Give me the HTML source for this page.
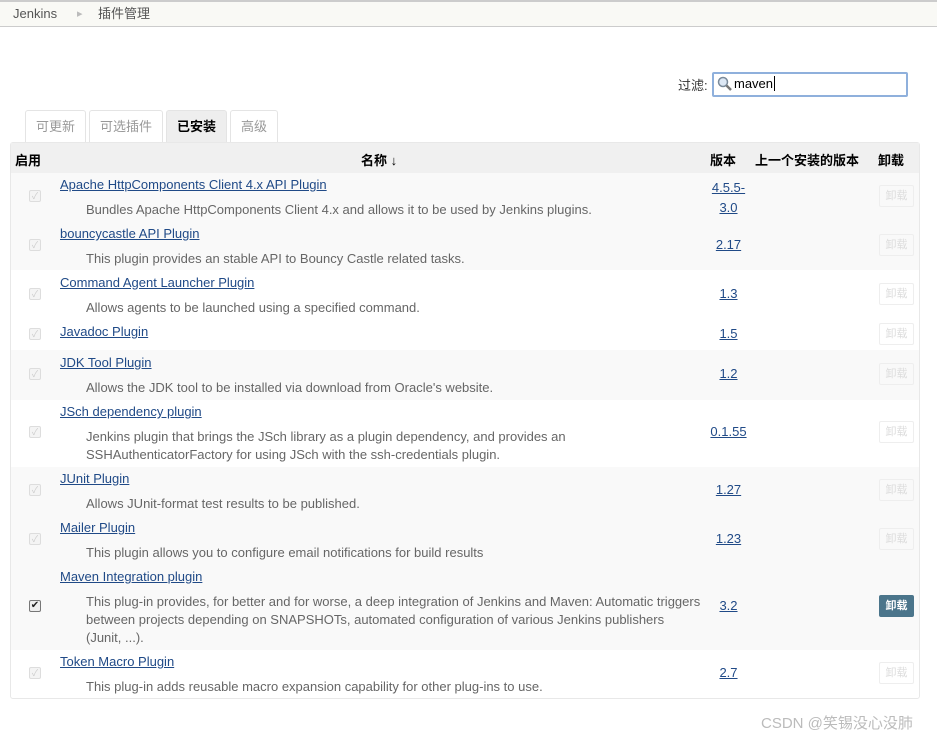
<!DOCTYPE html>
<html><head><meta charset="utf-8"><style>
*{margin:0;padding:0;box-sizing:border-box}
body{width:937px;height:737px;background:#fff;font-family:"Liberation Sans","Noto Sans CJK SC",sans-serif;font-size:13px;color:#333;position:relative;overflow:hidden}
.a{position:absolute;white-space:nowrap}
a{color:#204a87;text-decoration:underline}
.bc{left:0;top:0;width:937px;height:27px;background:#f9f9f5;border-top:2px solid #ccc;border-bottom:1px solid #ccc}
.tab{top:110px;height:32px;border:1px solid #e4e4e4;border-bottom:none;border-radius:3px 3px 0 0;color:#999;font-size:13px;text-align:center;line-height:31px}
.tbl{left:10px;top:142px;width:910px;height:557px;border:1px solid #e8e8e8;border-radius:3px}
.row{position:absolute;left:11px;width:908px}
.cb{position:absolute;left:18px;width:12px;height:12px;border:1px solid #ddd;border-radius:2px;background:#f4f4f4;color:#ccc;font-size:9px;line-height:10px;text-align:center}
.nm{position:absolute;left:49px;font-size:13px}
.ds{position:absolute;left:75px;color:#666;font-size:13px;line-height:18px}
.vr{position:absolute;left:690px;width:55px;text-align:center;line-height:20px}
.un{position:absolute;left:868px;width:35px;height:22px;border:1px solid #eee;border-radius:2px;color:#ddd;font-size:11px;text-align:center;line-height:20px}
</style></head><body>
<div class="a bc"></div>
<div class="a" style="left:13px;top:4px;height:20px;line-height:20px;color:#555">Jenkins</div>
<div class="a" style="left:77px;top:4px;height:20px;line-height:20px;color:#bbb;font-size:11px">▸</div>
<div class="a" style="left:98px;top:4px;height:20px;line-height:20px;color:#555">插件管理</div>
<div class="a" style="left:678px;top:75px;color:#333">过滤:</div>
<div class="a" style="left:712px;top:72px;width:196px;height:25px;border:2px solid #8fb0dc;border-radius:2px"></div>
<svg class="a" style="left:717px;top:76px" width="16" height="16"><circle cx="6" cy="6" r="4.5" fill="#dde8f5" stroke="#7a8a9a" stroke-width="1.5"/><line x1="9.5" y1="9.5" x2="14" y2="14" stroke="#777" stroke-width="2.5"/></svg>
<div class="a" style="left:734px;top:76px;color:#000">maven<span style="border-left:1px solid #000;margin-left:1px"></span></div>
<div class="a tab" style="left:25px;width:61px">可更新</div>
<div class="a tab" style="left:89px;width:74px">可选插件</div>
<div class="a tab" style="left:166px;width:61px;background:#eee;color:#000;font-weight:bold">已安装</div>
<div class="a tab" style="left:230px;width:48px">高级</div>
<div class="a tbl"></div>
<div class="a" style="left:11px;top:143px;width:908px;height:30px;background:#f0f0f0"></div>
<div class="a" style="left:15px;top:150px;font-weight:bold;color:#000">启用</div>
<div class="a" style="left:361px;top:150px;font-weight:bold;color:#000">名称 <span style="font-weight:normal">↓</span></div>
<div class="a" style="left:710px;top:150px;font-weight:bold;color:#000">版本</div>
<div class="a" style="left:755px;top:150px;font-weight:bold;color:#000">上一个安装的版本</div>
<div class="a" style="left:878px;top:150px;font-weight:bold;color:#000">卸载</div>

<div class="row" style="top:173px;height:97px;background:#f9f9f9"></div>
<div class="row" style="top:350px;height:50px;background:#f9f9f9"></div>
<div class="row" style="top:467px;height:183px;background:#f9f9f9"></div>

<div class="a" style="left:0;top:0">
<div class="cb" style="top:190px;left:29px">✓</div>
<a class="nm" style="top:177px;left:60px">Apache HttpComponents Client 4.x API Plugin</a>
<div class="ds" style="top:201px;left:86px">Bundles Apache HttpComponents Client 4.x and allows it to be used by Jenkins plugins.</div>
<div class="vr" style="top:178px;left:701px"><a>4.5.5-</a><br><a>3.0</a></div>
<div class="un" style="top:185px;left:879px">卸载</div>

<div class="cb" style="top:239px;left:29px">✓</div>
<a class="nm" style="top:226px;left:60px">bouncycastle API Plugin</a>
<div class="ds" style="top:250px;left:86px">This plugin provides an stable API to Bouncy Castle related tasks.</div>
<div class="vr" style="top:235px;left:701px"><a>2.17</a></div>
<div class="un" style="top:234px;left:879px">卸载</div>

<div class="cb" style="top:288px;left:29px">✓</div>
<a class="nm" style="top:275px;left:60px">Command Agent Launcher Plugin</a>
<div class="ds" style="top:299px;left:86px">Allows agents to be launched using a specified command.</div>
<div class="vr" style="top:284px;left:701px"><a>1.3</a></div>
<div class="un" style="top:283px;left:879px">卸载</div>

<div class="cb" style="top:328px;left:29px">✓</div>
<a class="nm" style="top:324px;left:60px">Javadoc Plugin</a>
<div class="vr" style="top:324px;left:701px"><a>1.5</a></div>
<div class="un" style="top:323px;left:879px">卸载</div>

<div class="cb" style="top:368px;left:29px">✓</div>
<a class="nm" style="top:355px;left:60px">JDK Tool Plugin</a>
<div class="ds" style="top:379px;left:86px">Allows the JDK tool to be installed via download from Oracle's website.</div>
<div class="vr" style="top:364px;left:701px"><a>1.2</a></div>
<div class="un" style="top:363px;left:879px">卸载</div>

<div class="cb" style="top:426px;left:29px">✓</div>
<a class="nm" style="top:404px;left:60px">JSch dependency plugin</a>
<div class="ds" style="top:428px;left:86px">Jenkins plugin that brings the JSch library as a plugin dependency, and provides an<br>SSHAuthenticatorFactory for using JSch with the ssh-credentials plugin.</div>
<div class="vr" style="top:422px;left:701px"><a>0.1.55</a></div>
<div class="un" style="top:421px;left:879px">卸载</div>

<div class="cb" style="top:484px;left:29px">✓</div>
<a class="nm" style="top:471px;left:60px">JUnit Plugin</a>
<div class="ds" style="top:495px;left:86px">Allows JUnit-format test results to be published.</div>
<div class="vr" style="top:480px;left:701px"><a>1.27</a></div>
<div class="un" style="top:479px;left:879px">卸载</div>

<div class="cb" style="top:533px;left:29px">✓</div>
<a class="nm" style="top:520px;left:60px">Mailer Plugin</a>
<div class="ds" style="top:544px;left:86px">This plugin allows you to configure email notifications for build results</div>
<div class="vr" style="top:529px;left:701px"><a>1.23</a></div>
<div class="un" style="top:528px;left:879px">卸载</div>

<div class="cb" style="top:600px;left:29px;border-color:#777;background:#eee;color:#222;font-size:10px">✔</div>
<a class="nm" style="top:569px;left:60px">Maven Integration plugin</a>
<div class="ds" style="top:593px;left:86px">This plug-in provides, for better and for worse, a deep integration of Jenkins and Maven: Automatic triggers<br>between projects depending on SNAPSHOTs, automated configuration of various Jenkins publishers<br>(Junit, ...).</div>
<div class="vr" style="top:596px;left:701px"><a>3.2</a></div>
<div class="un" style="top:595px;left:879px;background:#4b758b;border-color:#4b758b;color:#fff;font-weight:bold">卸载</div>

<div class="cb" style="top:667px;left:29px">✓</div>
<a class="nm" style="top:654px;left:60px">Token Macro Plugin</a>
<div class="ds" style="top:678px;left:86px">This plug-in adds reusable macro expansion capability for other plug-ins to use.</div>
<div class="vr" style="top:663px;left:701px"><a>2.7</a></div>
<div class="un" style="top:662px;left:879px">卸载</div>
</div>
<div class="a" style="left:761px;top:712px;color:#bbb;font-size:15px">CSDN @笑锡没心没肺</div>
</body></html>
